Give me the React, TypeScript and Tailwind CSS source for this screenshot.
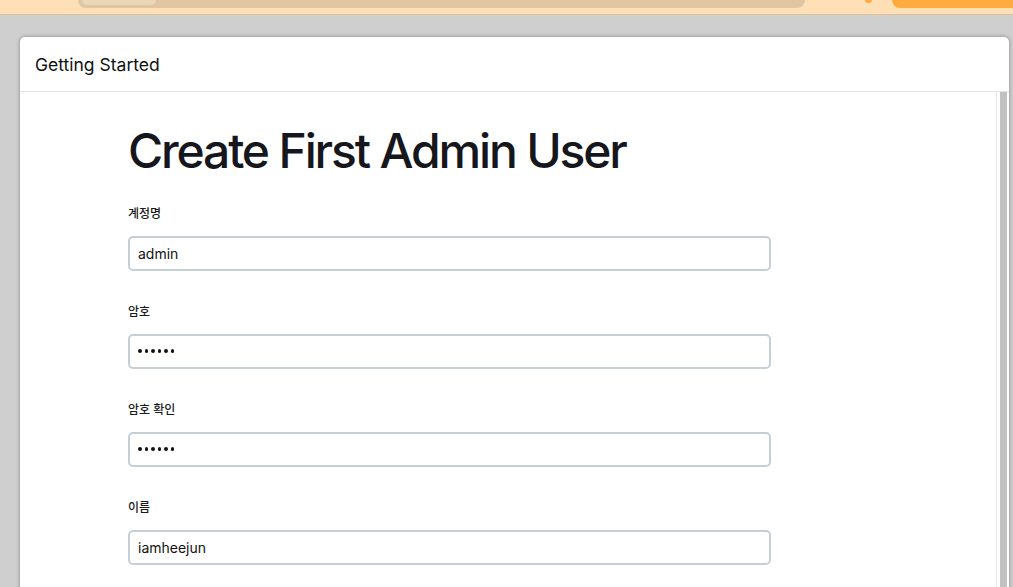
import React from "react";

const fields = [
  { label: "계정명", value: "admin", dots: false },
  { label: "암호", value: "", dots: true },
  { label: "암호 확인", value: "", dots: true },
  { label: "이름", value: "iamheejun", dots: false },
];

export default function App() {
  return (
    <div
      className="w-[1013px] h-[587px] overflow-hidden bg-[#cfcfcf] flex flex-col"
      style={{ fontFamily: 'Inter, "Noto Sans CJK KR", sans-serif' }}
    >
      <div className="h-[15px] shrink-0 bg-[#ffdfb5] border-b border-[#dcc19b] flex items-start">
        <div className="ml-[78px] w-[727px] h-[8px] rounded-b-[9px] bg-[#e0c6a3]">
          <div className="ml-[4px] w-[74px] h-[5px] rounded-b-[6px] bg-[#ebd6b6]" />
        </div>
        <div className="ml-[60px] w-[7px] h-[3px] rounded-b-full bg-[#ffab40]" />
        <div className="ml-[20px] flex-1 h-[8px] rounded-bl-[10px] bg-[#ffab40]" />
      </div>
      <div className="pt-[22px] pl-[20px] flex-1">
        <div className="w-[989px] h-[600px] bg-white rounded-t-[5px] shadow-[0_0_4px_rgba(0,0,0,0.35)] flex flex-col">
          <div className="h-[55px] shrink-0 border-b border-[#e4e4e4] flex items-center pl-[15px] pt-[3px] text-[17.5px] text-[#111]">
            Getting Started
          </div>
          <div className="flex flex-1">
            <div className="flex-1 pl-[108px] pt-[30px]">
              <h1 className="text-[48px] leading-[1.2] font-medium text-[#16161d] tracking-[-0.045em]">
                Create First Admin User
              </h1>
              {fields.map((f, i) => (
                <div key={f.label} className={i === 0 ? "mt-[26px]" : "mt-[33px]"}>
                  <div className="text-[12px] leading-[16px] font-medium text-[#1a1a1a]">{f.label}</div>
                  <div className="mt-[14px] w-[643px] h-[35px] border-2 border-[#c6cfd5] rounded-[5px] px-[8px] text-[14px] text-[#111] bg-white flex items-center">
                    {f.dots ? (
                      <div className="flex gap-[3px] items-center">
                        {[0, 1, 2, 3, 4, 5].map((d) => (
                          <span key={d} className="block w-[3.5px] h-[3.5px] rounded-full bg-[#111]" />
                        ))}
                      </div>
                    ) : (
                      f.value
                    )}
                  </div>
                </div>
              ))}
            </div>
            <div className="w-[13px] shrink-0 border-l border-[#e8e8e8] pl-[3px]">
              <div className="w-[7px] h-full bg-[#c1c1c1]" />
            </div>
          </div>
        </div>
      </div>
    </div>
  );
}
